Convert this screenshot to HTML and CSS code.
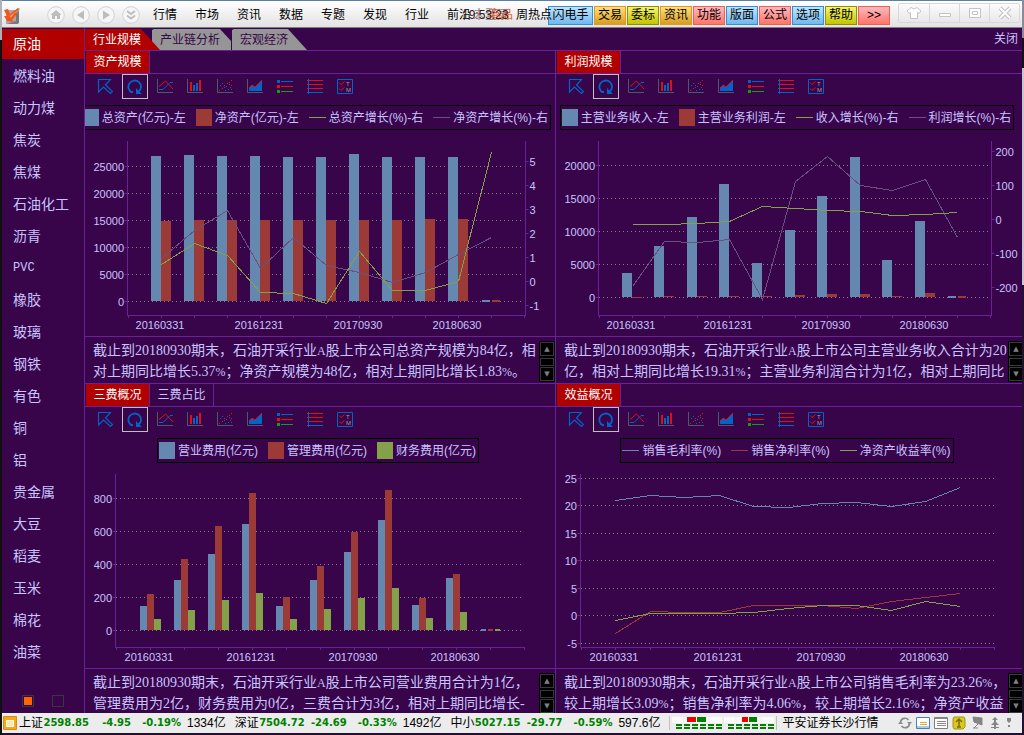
FILE: index.html
```html
<!DOCTYPE html>
<html lang="zh-CN">
<head>
<meta charset="utf-8">
<title>行业规模</title>
<link rel="stylesheet" href="styles.css">
</head>
<body>
<svg class="defs" aria-hidden="true">
  <symbol id="i-arrow" viewBox="0 0 16 15"><path d="M1.5 .5H13.5L8.5 6L15.5 12.5L13.500 14.500L6.500 8L1.500 13Z" fill="none" stroke="#0064c8" stroke-width="1.200"/></symbol>
  <symbol id="i-refresh" viewBox="0 0 16 15"><path d="M5 13.500A6.300 6.300 0 1 1 11.500 12.800" fill="none" stroke="#0064c8" stroke-width="1.800"/><path d="M9 15V9L15 15Z M4 12H6V14H4Z" fill="#0064c8"/></symbol>
  <symbol id="i-line" viewBox="0 0 16 15"><path d="M.5 0V13.500H16" fill="none" stroke="#4c5a70"/><path d="M2 7.500L8.500 2L16 10" fill="none" stroke="#e01010"/><path d="M2 10.500H6L13 3.500H16" fill="none" stroke="#0064c8"/></symbol>
  <symbol id="i-bar" viewBox="0 0 16 15"><path d="M.5 0V13.500H16" fill="none" stroke="#4c5a70"/><path d="M3 3H5V12H3Z M12 1H14V12H12Z" fill="#e01010"/><path d="M6 6H8V12H6Z M9 4H11V12H9Z" fill="#0064c8"/></symbol>
  <symbol id="i-scatter" viewBox="0 0 16 15"><path d="M.5 0V13.500H16" fill="none" stroke="#4c5a70"/><path d="M2 11h1v1h-1zM5 9h1v1h-1zM7 6h1v1h-1zM10 4h1v1h-1zM12 3h1v1h-1zM14 1h1v1h-1zM13 8h1v1h-1zM14 6h1v1h-1z" fill="#e01010"/><path d="M3 6h1v1h-1zM5 4h1v1h-1zM8 11h1v1h-1zM7 8h1v1h-1zM9 7h1v1h-1zM11 10h1v1h-1zM12 5h1v1h-1zM14 10h1v1h-1z" fill="#0064c8"/></symbol>
  <symbol id="i-area" viewBox="0 0 16 15"><path d="M2 12V9L5 6L8 8L15 1V12Z" fill="#0064c8"/><path d="M2 9L5 6L8 8L15 1" fill="none" stroke="#e01010"/><path d="M.5 0V13.500H16" fill="none" stroke="#4c5a70"/></symbol>
  <symbol id="i-list" viewBox="0 0 16 15"><path d="M0 1H3V4H0ZM4 2H16V3H4Z" fill="#0064c8"/><path d="M0 6H3V9H0ZM4 7H16V8H4Z" fill="#e01010"/><path d="M0 11H3V14H0ZM4 12H16V13H4Z" fill="#10a010"/></symbol>
  <symbol id="i-rows" viewBox="0 0 16 15"><path d="M0 1H16V2H0ZM0 5H16V6H0ZM0 9H16V10H0Z" fill="#e01010"/><path d="M1 0H2V15H1ZM0 13H16V14H0Z" fill="#0064c8"/></symbol>
  <symbol id="i-mark" viewBox="0 0 16 15"><path d="M.5 .5H15.500V14.500H.5Z" fill="none" stroke="#0064c8"/><path d="M2 3.500L4 5.500L7.500 2.500M2 9.500L4 11.500L7.500 8.500" fill="none" stroke="#e01010"/><text x="9" y="7" class="mark-text">T</text><text x="9" y="13" class="mark-text">M</text></symbol>
  <symbol id="i-ring" viewBox="0 0 18 18"><circle cx="9" cy="9" r="8.300" fill="#f6f6f6" stroke="#d2d2d2"/></symbol>
</svg>

<div class="app">
  <header class="topbar">
    <svg class="logo" viewBox="0 0 18 18"><path d="M3 3H16V16L14 17H3Z" fill="#a8a8a8"/><path d="M13 6L16 4V16L14 17H4L13 14Z" fill="#787878"/><path d="M1 3L5 2L7 7L15 1L17 2L11 6L15 6L9 13L11 15L4 14L1 9L4 9Z" fill="#f2541c"/><path d="M5 7L7 9L12 5L8 11Z" fill="#ffa060"/></svg>
    <nav class="nav">
      <button class="round" aria-label="主页"><svg viewBox="0 0 18 18"><use href="#i-ring"/><path d="M9 4L14.500 9H13V13H10V10H8V13H5V9H3.500Z" fill="#bcbcbc"/></svg></button>
      <button class="round" aria-label="后退"><svg viewBox="0 0 18 18"><use href="#i-ring"/><path d="M12 4.500V13.500L5 9Z" fill="#bcbcbc"/></svg></button>
      <button class="round" aria-label="前进"><svg viewBox="0 0 18 18"><use href="#i-ring"/><path d="M6 4.500V13.500L13 9Z" fill="#bcbcbc"/></svg></button>
      <button class="round" aria-label="更多"><svg viewBox="0 0 18 18"><use href="#i-ring"/><path d="M5 5L9 8L13 5M5 9.500L9 12.500L13 9.500" fill="none" stroke="#bcbcbc" stroke-width="1.800"/></svg></button>
    </nav>
    <nav class="menu">
      <a href="#">行情</a><a href="#">市场</a><a href="#">资讯</a><a href="#">数据</a><a href="#">专题</a><a href="#">发现</a><a href="#">行业</a><a href="#">前沿</a>
      <span class="ghost ghost--user">未登录</span>
      <span class="ghost ghost--goods">商品</span>
      <span class="ghost ghost--clock">19:53:23</span>
      <span class="ghost ghost--hot">周热点</span>
    </nav>
    <div class="quick">
      <button class="chip chip--blue chip--wide">闪电手</button><button class="chip chip--gold">交易</button><button class="chip chip--lime">委标</button><button class="chip chip--gold">资讯</button><button class="chip chip--red">功能</button><button class="chip chip--blue">版面</button><button class="chip chip--red">公式</button><button class="chip chip--blue">选项</button><button class="chip chip--lime">帮助</button><button class="chip chip--red">&gt;&gt;</button>
    </div>
    <div class="winbtns">
      <button aria-label="皮肤"><svg viewBox="0 0 16 14"><path d="M5 1.500L8 3L11 1.500L15 5L13 7.500L11.500 6.500V12.500H4.500V6.500L3 7.500L1 5Z" fill="#fff" stroke="#c4c4c4"/></svg></button>
      <button aria-label="最小化"><svg viewBox="0 0 16 14"><path d="M2.500 7.500H13.500V10.500H2.500Z" fill="#fff" stroke="#c4c4c4"/></svg></button>
      <button aria-label="还原"><svg viewBox="0 0 16 14"><path d="M2.500 2.500H13.500V11.500H2.500ZM5.500 5.500H10.500V8.500H5.500Z" fill="#fff" stroke="#c4c4c4"/></svg></button>
      <button aria-label="关闭窗口"><svg viewBox="0 0 16 14"><path d="M3 2L13 12M13 2L3 12" stroke="#c0c0c0" stroke-width="4"/><path d="M3 2L13 12M13 2L3 12" stroke="#fff" stroke-width="2"/></svg></button>
    </div>
  </header>

  <div class="body">
    <aside class="side">
      <nav class="side-list">
        <a href="#" class="is-on">原油</a><a href="#">燃料油</a><a href="#">动力煤</a><a href="#">焦炭</a><a href="#">焦煤</a><a href="#">石油化工</a><a href="#">沥青</a><a href="#" class="latin">PVC</a><a href="#">橡胶</a><a href="#">玻璃</a><a href="#">钢铁</a><a href="#">有色</a><a href="#">铜</a><a href="#">铝</a><a href="#">贵金属</a><a href="#">大豆</a><a href="#">稻麦</a><a href="#">玉米</a><a href="#">棉花</a><a href="#">油菜</a>
      </nav>
      <div class="pager"><button class="is-on" aria-label="第1页"></button><button aria-label="第2页"></button></div>
    </aside>

    <main class="main">
      <div class="tabs">
        <button class="tab tab--first">行业规模</button><button class="tab tab--mid">产业链分析</button><button class="tab tab--last">宏观经济</button>
        <a href="#" class="close">关闭</a>
      </div>
      <div class="panels">
        <section class="panel">
          <div class="head"><button class="subtab is-on">资产规模</button></div>
          <div class="tools"></div>
          <div class="legend-row legend-row--end"><ul class="legend">
            <li><i class="box c-blue"></i>总资产(亿元)-左</li><li><i class="box c-red"></i>净资产(亿元)-左</li><li><i class="dash c-green"></i>总资产增长(%)-右</li><li><i class="dash c-violet"></i>净资产增长(%)-右</li>
          </ul></div>
          <div class="chart" data-chart="assets"></div>
          <div class="note"><p>截止到20180930期末，石油开采行业<small>A</small>股上市公司总资产规模为84亿，相<br>对上期同比增长5.37<small>%</small>；净资产规模为48亿，相对上期同比增长1.83<small>%</small>。</p><div class="scroll"><button aria-label="上">▲</button><i></i><button aria-label="下">▼</button></div></div>
        </section>
        <section class="panel">
          <div class="head"><button class="subtab is-on">利润规模</button></div>
          <div class="tools"></div>
          <div class="legend-row"><ul class="legend">
            <li><i class="box c-blue"></i>主营业务收入-左</li><li><i class="box c-red"></i>主营业务利润-左</li><li><i class="dash c-green"></i>收入增长(%)-右</li><li><i class="dash c-violet"></i>利润增长(%)-右</li>
          </ul></div>
          <div class="chart" data-chart="profit"></div>
          <div class="note"><p>截止到20180930期末，石油开采行业<small>A</small>股上市公司主营业务收入合计为20<br>亿，相对上期同比增长19.31<small>%</small>；主营业务利润合计为1亿，相对上期同比</p><div class="scroll"><button aria-label="上">▲</button><i></i><button aria-label="下">▼</button></div></div>
        </section>
        <section class="panel panel--low">
          <div class="head"><button class="subtab is-on">三费概况</button><button class="subtab">三费占比</button></div>
          <div class="tools"></div>
          <div class="legend-row"><ul class="legend">
            <li><i class="box c-blue"></i>营业费用(亿元)</li><li><i class="box c-red"></i>管理费用(亿元)</li><li><i class="box c-green"></i>财务费用(亿元)</li>
          </ul></div>
          <div class="chart" data-chart="costs"></div>
          <div class="note"><p>截止到20180930期末，石油开采行业<small>A</small>股上市公司营业费用合计为1亿，<br>管理费用为2亿，财务费用为0亿，三费合计为3亿，相对上期同比增长-</p><div class="scroll"><button aria-label="上">▲</button><i></i><button aria-label="下">▼</button></div></div>
        </section>
        <section class="panel panel--low">
          <div class="head"><button class="subtab is-on">效益概况</button></div>
          <div class="tools"></div>
          <div class="legend-row"><ul class="legend">
            <li><i class="dash c-blue"></i>销售毛利率(%)</li><li><i class="dash c-red"></i>销售净利率(%)</li><li><i class="dash c-green"></i>净资产收益率(%)</li>
          </ul></div>
          <div class="chart" data-chart="yield"></div>
          <div class="note"><p>截止到20180930期末，石油开采行业<small>A</small>股上市公司销售毛利率为23.26<small>%</small>，<br>较上期增长3.09<small>%</small>；销售净利率为4.06<small>%</small>，较上期增长2.16<small>%</small>；净资产收益</p><div class="scroll"><button aria-label="上">▲</button><i></i><button aria-label="下">▼</button></div></div>
        </section>
      </div>
    </main>
  </div>

  <footer class="status">
    <svg class="coin" viewBox="0 0 14 14"><path d="M.5 .5H13.500V13.500H.5Z" fill="#f4a820" stroke="#d88c10"/><path d="M3.500 4.500H10.500V10.500H3.500Z" fill="#ffe9a0" stroke="#fff"/></svg>
    <div class="index"><span>上证</span><b>2598.85</b><b>-4.95</b><b>-0.19%</b><span class="amt">1334亿</span></div>
    <div class="index"><span>深证</span><b>7504.72</b><b>-24.69</b><b>-0.33%</b><span class="amt">1492亿</span></div>
    <div class="index"><span>中小</span><b>5027.15</b><b>-29.77</b><b>-0.59%</b><span class="amt">597.6亿</span></div>
    <div class="gauges">
      <svg viewBox="0 0 50 14"><path d="M0 1H50V7H0Z" fill="#fafafa"/><path d="M12 1V7M37 1V7" stroke="#ececec"/><path d="M15 1H24V6H15Z" fill="#f00000"/><path d="M25 1H34V6H25Z" fill="#008000"/><path d="M4 9H50M4 12H50" stroke="#008000" stroke-width="2" stroke-dasharray="6 2"/></svg>
      <svg viewBox="0 0 50 14"><path d="M0 1H50V7H0Z" fill="#fafafa"/><path d="M12 1V7M37 1V7" stroke="#ececec"/><path d="M18 1H24V6H18Z" fill="#f00000"/><path d="M25 1H33V6H25Z" fill="#008000"/><path d="M4 9H50M4 12H50" stroke="#008000" stroke-width="2" stroke-dasharray="6 2"/></svg>
    </div>
    <span class="site">平安证券长沙行情</span>
    <div class="tray">
      <svg viewBox="0 0 14 14"><path d="M2.500 6A4.500 4.500 0 0 1 10.500 4M11.500 8A4.500 4.500 0 0 1 3.500 10" fill="none" stroke="#8a8a8a" stroke-width="1.600"/><path d="M9 6H14L11.500 9ZM0 8H5L2.500 5Z" fill="#8a8a8a"/></svg>
      <svg viewBox="0 0 14 14"><path d="M.5 1.500H13.500V12.500H.5Z" fill="#fff" stroke="#4a80c0"/><path d="M1 10H13V12H1Z" fill="#a8c8f0"/><path d="M4 6.500H11M4 8.500H11" stroke="#e0b020"/></svg>
      <svg viewBox="0 0 14 14"><path d="M.5 1.500H13.500V12.500H.5Z" fill="#fff" stroke="#808080"/><path d="M1 2.500H13M3 5.500H12M3 7.500H12M3 9.500H12" stroke="#8a8a8a"/></svg>
      <svg viewBox="0 0 14 14"><path d="M2 1H12L13 3V11L11 13H2L1 11V3Z" fill="#d8c820" stroke="#a09810"/><path d="M7 3V11M4 6L7 3L10 6M5 11H9" fill="none" stroke="#806c00" stroke-width="1.500"/></svg>
      <svg viewBox="0 0 14 14"><path d="M3 1L12 2V9L4 6ZM8 8L4 12M3 12H8" fill="#858585" stroke="#858585"/></svg>
      <svg viewBox="0 0 14 14"><path d="M7 1L10 4H4ZM7 5L11 9H3ZM6 4H8V13H6ZM3 11H11V12H3Z" fill="#858585"/></svg>
      <svg class="bang" viewBox="0 0 6 14"><path d="M1 2H5V5L3 7L1 5ZM2 9H4V11H2Z" fill="#858585"/></svg>
    </div>
  </footer>
</div>
<script src="charts.js"></script>
</body>
</html>
```
FILE: styles.css
```css
* { box-sizing: border-box; }

html, body { height: 100%; }

body {
  margin: 0;
  padding: 0 2px 2px;
  background:
    linear-gradient(#b0b0b8 0 40px, #101010 40px) 0 0 / 2px 100% no-repeat,
    linear-gradient(#8a8a9a 0 38px, #141018 38px 68px, #c8c8cc 68px 285px, #241030 285px);
  font: 12px/16px "Liberation Sans", "Noto Sans CJK SC", sans-serif;
  color: #c8c4ff;
  overflow: hidden;
}

button { margin: 0; padding: 0; border: 0; background: none; color: inherit; font: inherit; }
a { color: inherit; text-decoration: none; }
p, ul { margin: 0; padding: 0; list-style: none; }
svg { display: block; }

.defs { position: absolute; width: 0; height: 0; }
.mark-text { font: 6px "Liberation Sans", sans-serif; fill: #a0a0a0; }

.app { display: flex; flex-direction: column; height: 100%; background: #38044a; }

/* top bar */
.topbar {
  display: flex;
  flex: none;
  height: 28px;
  padding-left: 1px;
  border-top: 1px solid #5a80a8;
  border-bottom: 1px solid #808080;
  background: linear-gradient(#ffffff, #e2e2e2);
  color: #000;
}
.logo { flex: none; width: 18px; height: 18px; margin-top: 6px; }
.nav { display: flex; gap: 7px; margin: 5px 0 0 26px; }
.round { width: 18px; height: 18px; }
.menu { position: relative; display: flex; gap: 18px; margin-left: 13px; padding-top: 6px; white-space: nowrap; }
.ghost { position: absolute; top: 6px; }
.ghost--user { left: 320px; color: #907888; }
.ghost--goods { left: 336px; color: #f05a28; }
.ghost--clock { left: 309px; color: #302018; }
.ghost--hot { left: 363px; }

.quick { display: flex; gap: 1px; margin: 5px 0 0 auto; }
.chip { width: 32px; height: 19px; border: 1px solid; line-height: 17px; white-space: nowrap; }
.chip--wide { width: 45px; }
.chip--blue { border-color: #3090e0; background: linear-gradient(#c0e4fc, #70b8f0); }
.chip--gold { border-color: #e09820; background: linear-gradient(#ffe080, #d89c20); }
.chip--lime { border-color: #909000; background: linear-gradient(#f4f470, #c4c400); }
.chip--red { border-color: #f06050; background: linear-gradient(#ffb8c0, #ff7468); }

.winbtns { display: flex; height: 20px; margin: 2px 2px 0 8px; border: 1px solid #d8d8d8; border-radius: 2px; }
.winbtns button { display: grid; place-items: center; width: 30px; border-left: 1px solid #d8d8d8; }
.winbtns button:first-child { border-left: 0; }
.winbtns svg { width: 16px; height: 14px; }

/* body */
.body { display: flex; flex: 1; min-height: 0; }
.side { display: flex; flex: none; flex-direction: column; width: 83px; border-right: 1px solid #6a209a; }
.side-list { display: flex; flex-direction: column; padding-top: 1px; font-size: 14px; }
.side-list a { height: 32px; padding-left: 11px; border-bottom: 2px solid transparent; line-height: 30px; background-clip: padding-box; }
.side-list .is-on { background-color: #b00000; color: #fff; }
.side-list .latin { font-family: "Liberation Mono", monospace; font-size: 12px; }
.pager { display: flex; gap: 18px; margin-top: auto; padding: 0 0 6px 20px; }
.pager button { width: 12px; height: 12px; border: 1px solid #383838; }
.pager .is-on { background: #ff6400; box-shadow: inset 0 0 0 1px #38044a; }

.main { display: flex; flex: 1; flex-direction: column; min-width: 0; }
.tabs { display: flex; flex: none; height: 23px; padding-top: 1px; border-bottom: 1px solid #6a209a; }
.tab { height: 21px; text-align: left; white-space: nowrap; background: #969696; color: #38044a; }
.tab--first { z-index: 1; width: 75px; padding-left: 8px; background: #b00000; color: #fff; clip-path: polygon(0 0, 56px 0, 100% 100%, 0 100%); }
.tab--mid { width: 79px; margin-left: -8px; padding-left: 8px; clip-path: polygon(0 1px, 2px 0, 68px 0, 100% 12px, 100% 100%, 0 100%); }
.tab--last { width: 75px; margin-left: 1px; padding-left: 8px; clip-path: polygon(0 1px, 2px 0, 56px 0, 100% 100%, 0 100%); }
.close { margin-left: auto; padding: 2px 4px 0 0; }

.panels { display: grid; flex: 1; min-height: 0; grid-template: 333fr 329fr / 471fr 466fr; }
.panel { display: flex; flex-direction: column; min-width: 0; min-height: 0; overflow: hidden; border-bottom: 1px solid #6a209a; }
.panel:nth-child(odd) { border-right: 1px solid #6a209a; }
.panel--low { border-bottom: 0; }
.head { display: flex; flex: none; height: 23px; padding-left: 1px; border-bottom: 1px solid #6a209a; }
.subtab { width: 64px; height: 22px; border-right: 1px solid #6a209a; }
.subtab.is-on { background: #b00000; color: #fff; }

.tools { display: flex; flex: none; gap: 4px; height: 25px; padding-left: 7px; }
.tools button { display: grid; place-items: center; width: 26px; height: 25px; border: 1px solid transparent; }
.tools .is-on { border-color: #c0c0c0; }
.tools svg { width: 16px; height: 15px; }

.legend-row { display: flex; flex: none; justify-content: center; padding: 6px 4px 0 0; }
.legend-row--end { justify-content: flex-end; }
.legend { display: flex; flex: none; gap: 10px; height: 25px; padding: 0 2px 0 1px; border: 1px solid #000; white-space: nowrap; }
.legend li { display: flex; align-items: center; gap: 3px; }
.box { width: 16px; height: 17px; }
.dash { width: 17px; height: 1px; }
.c-blue { background: #6488b0; }
.c-red { background: #9c3a38; }
.c-green { background: #84a048; }
.c-violet { background: #6a5080; }

.chart { flex: 1; min-height: 0; overflow: hidden; }
.chart svg { width: 100%; height: 100%; }
.chart text { font: 11px "Liberation Sans", sans-serif; fill: #c8c4ff; }
.axis { stroke: #6a209a; fill: none; }
.grid { stroke: #808080; stroke-dasharray: 1 3; }
.series { fill: none; }

.note { display: flex; flex: none; height: 47px; padding: 3px 0 0 8px; border-top: 1px solid #6a209a; overflow: hidden; }
.panel--low .note { height: 45px; }
.panel:nth-child(even) .note { margin-right: -2px; }
.note p { flex: 1; min-width: 0; white-space: nowrap; font: 14px/21px "Liberation Serif", "Noto Sans CJK SC", sans-serif; }
.note small { font-size: 12px; line-height: 1; }
.scroll { display: flex; flex: none; flex-direction: column; justify-content: space-between; width: 16px; height: 41px; margin-top: 1px; padding: 1px; background: #000; }
.scroll button { height: 14px; border: 1px solid #383838; color: #808080; font: 7px/12px "DejaVu Sans", sans-serif; }
.scroll i { height: 8px; border: 1px solid #383838; }

/* status bar */
.status { display: flex; flex: none; align-items: center; height: 20px; padding: 0 2px 0 1px; background: #ececec; color: #000; white-space: nowrap; }
.coin { flex: none; width: 14px; height: 14px; margin-right: 2px; }
.index { display: grid; flex: none; grid-template-columns: 24px 46px 42px 50px auto; margin-right: 9px; }
.index b { color: #008000; font: bold 10px/16px "DejaVu Sans", sans-serif; text-align: right; }
.index .amt { padding-left: 6px; }
.gauges { display: flex; flex: none; gap: 2px; margin-left: auto; padding: 0 2px; border-left: 1px solid #c0c0c0; border-right: 1px solid #c0c0c0; }
.gauges svg { width: 50px; height: 14px; }
.site { flex: none; margin-left: 5px; }
.tray { display: flex; flex: none; gap: 4px; margin: 0 8px 0 20px; }
.tray svg { width: 14px; height: 14px; }
.tray .bang { width: 6px; }
```
FILE: charts.js
```js
const COLORS = { blue: '#6488b0', red: '#9c3a38', green: '#84a048', violet: '#6a5080' };

const CHARTS = {
  assets: {
    left: 42, right: 30, gridRight: 33, zero: 172, step: 27, ticks: [0, 5000, 10000, 15000, 20000, 25000],
    right2: { zero: 152, step: 24, ticks: [-1, 0, 1, 2, 3, 4, 5] },
    barWidth: 10,
    bars: [
      ['blue', [26975, 27160, 26975, 26975, 26790, 26790, 27345, 26790, 26790, 26790, 84]],
      ['red', [14938, 15123, 15123, 15123, 15123, 15123, 15123, 15123, 15309, 15309, 48]]
    ],
    lines: [
      ['violet', [0.96, 2.12, 2.96, 0.54, 1.83, 0.67, 0.38, -0.04, 0.38, 1.12, 1.83]],
      ['green', [0.7, 1.58, 1.07, -0.46, -0.5, -0.92, 1.25, -0.38, -0.38, 0, 5.37]]
    ]
  },
  profit: {
    left: 42, right: 31, gridRight: 34, zero: 168, step: 33, ticks: [0, 5000, 10000, 15000, 20000],
    right2: { zero: 90, step: 34, ticks: [-200, -100, 0, 100, 200] },
    barWidth: 10,
    bars: [
      ['blue', [3756, 7868, 12284, 17316, 5279, 10305, 15482, 21429, 5736, 11675, 20]],
      ['red', [100, 250, 250, 250, 250, 400, 560, 560, 250, 710, 1]]
    ],
    lines: [
      ['violet', [-196, -65, -68, -59, -234, 112, 184, 99, 84, 117, -53]],
      ['green', [-14, -14, -11, -6, 39, 33, 27, 23, 12, 15, 21]]
    ]
  },
  costs: {
    left: 30, right: 30, gridRight: 33, zero: 168, step: 33, ticks: [0, 200, 400, 600, 800],
    barWidth: 7,
    bars: [
      ['blue', [152, 310, 468, 649, 152, 310, 480, 674, 159, 322, 1]],
      ['red', [225, 437, 637, 837, 207, 395, 601, 855, 201, 346, 2]],
      ['green', [72, 128, 189, 231, 72, 134, 201, 262, 80, 116, 0]]
    ],
    lines: []
  },
  yield: {
    left: 24, right: 27, gridRight: 28, zero: 153, step: 27.5, ticks: [-5, 0, 5, 10, 15, 20, 25],
    barWidth: 0,
    bars: [],
    lines: [
      ['blue', [21, 21.9, 21.4, 21.9, 19.9, 19.7, 20.3, 20.6, 19.9, 20.8, 23.26]],
      ['red', [-3.2, 0.75, 0.6, 0.5, 1.85, 1.85, 1.8, 1.3, 2.6, 3.3, 4.06]],
      ['green', [-0.9, 0.4, 0.4, 0.4, 0.6, 1.3, 1.85, 1.85, 0.95, 2.6, 1.65]]
    ]
  }
};

const DATES = { 1: '20160331', 4: '20161231', 7: '20170930', 10: '20180630' };
const TOP = 11;

function draw(host) {
  const c = CHARTS[host.dataset.chart];
  const w = host.clientWidth;
  const h = host.clientHeight;
  const bottom = h - 21;
  const x0 = c.left + 1;
  const pitch = (w - c.right - 1 - x0) / 12;
  const xAt = k => Math.round(x0 + pitch * k);
  const scale = (zero, step, ticks) => v => zero - v * step / (ticks[1] - ticks[0]);
  const yLeft = scale(c.zero, c.step, c.ticks);
  const yLine = c.right2 ? scale(c.right2.zero, c.right2.step, c.right2.ticks) : yLeft;
  const axisX = c.left + 0.5;
  let s = '';

  c.ticks.forEach(t => {
    const y = Math.round(yLeft(t)) - 0.5;
    s += `<path class="grid" d="M${c.left + 1} ${y}H${w - c.gridRight}"/>`;
    s += `<path class="axis" d="M${axisX - 3} ${y}H${axisX}"/>`;
    s += `<text x="${c.left - 3}" y="${y + 4.5}" text-anchor="end">${t}</text>`;
  });

  c.bars.forEach(([color, values], n) => values.forEach((v, i) => {
    const x = xAt(i + 1) - Math.floor(c.barWidth * c.bars.length / 2) + n * c.barWidth;
    const tiny = i === values.length - 1;
    const base = c.zero - 1;
    const y = tiny ? base - 1 : Math.round(yLeft(v));
    s += `<rect x="${tiny ? x + 1 : x}" y="${y}" width="${c.barWidth - (tiny ? 2 : 0)}" height="${tiny ? 2 : Math.max(1, base - y)}" fill="${COLORS[color]}"/>`;
  }));

  c.lines.forEach(([color, values]) => {
    const points = values.map((v, i) => `${xAt(i + 1) + 0.5},${Math.round(yLine(v)) - 0.5}`).join(' ');
    s += `<polyline class="series" points="${points}" stroke="${COLORS[color]}" shape-rendering="crispEdges"/>`;
  });

  s += `<path class="axis" d="M${axisX} ${TOP}V${bottom + 0.5}H${xAt(12)}"/>`;
  for (let k = 0; k <= 12; k++) {
    s += `<path class="axis" d="M${xAt(k) + 0.5} ${bottom}V${bottom + 3}"/>`;
    if (DATES[k]) s += `<text x="${xAt(k) - 1}" y="${bottom + 14}" text-anchor="middle">${DATES[k]}</text>`;
  }
  if (c.right2) {
    const rx = w - c.right + 0.5;
    s += `<path class="axis" d="M${rx} ${TOP}V${bottom + 1}"/>`;
    c.right2.ticks.forEach(t => {
      const y = Math.round(yLine(t)) - 0.5;
      s += `<path class="axis" d="M${rx} ${y}H${rx + 3}"/><text x="${rx + 4}" y="${y + 4.5}">${t}</text>`;
    });
  }
  host.innerHTML = `<svg>${s}</svg>`;
}

const TOOLS = [
  ['arrow', '选择'], ['refresh', '刷新'], ['line', '折线图'], ['bar', '柱状图'], ['scatter', '散点图'],
  ['area', '面积图'], ['list', '图例'], ['rows', '网格'], ['mark', '标记']
];

document.querySelectorAll('.tools').forEach(bar => {
  bar.innerHTML = TOOLS.map(([id, label]) =>
    `<button aria-label="${label}"${id === 'refresh' ? ' class="is-on"' : ''}><svg><use href="#i-${id}"/></svg></button>`
  ).join('');
});

function drawAll() {
  document.querySelectorAll('.chart').forEach(draw);
}
drawAll();
window.addEventListener('resize', drawAll);
```
